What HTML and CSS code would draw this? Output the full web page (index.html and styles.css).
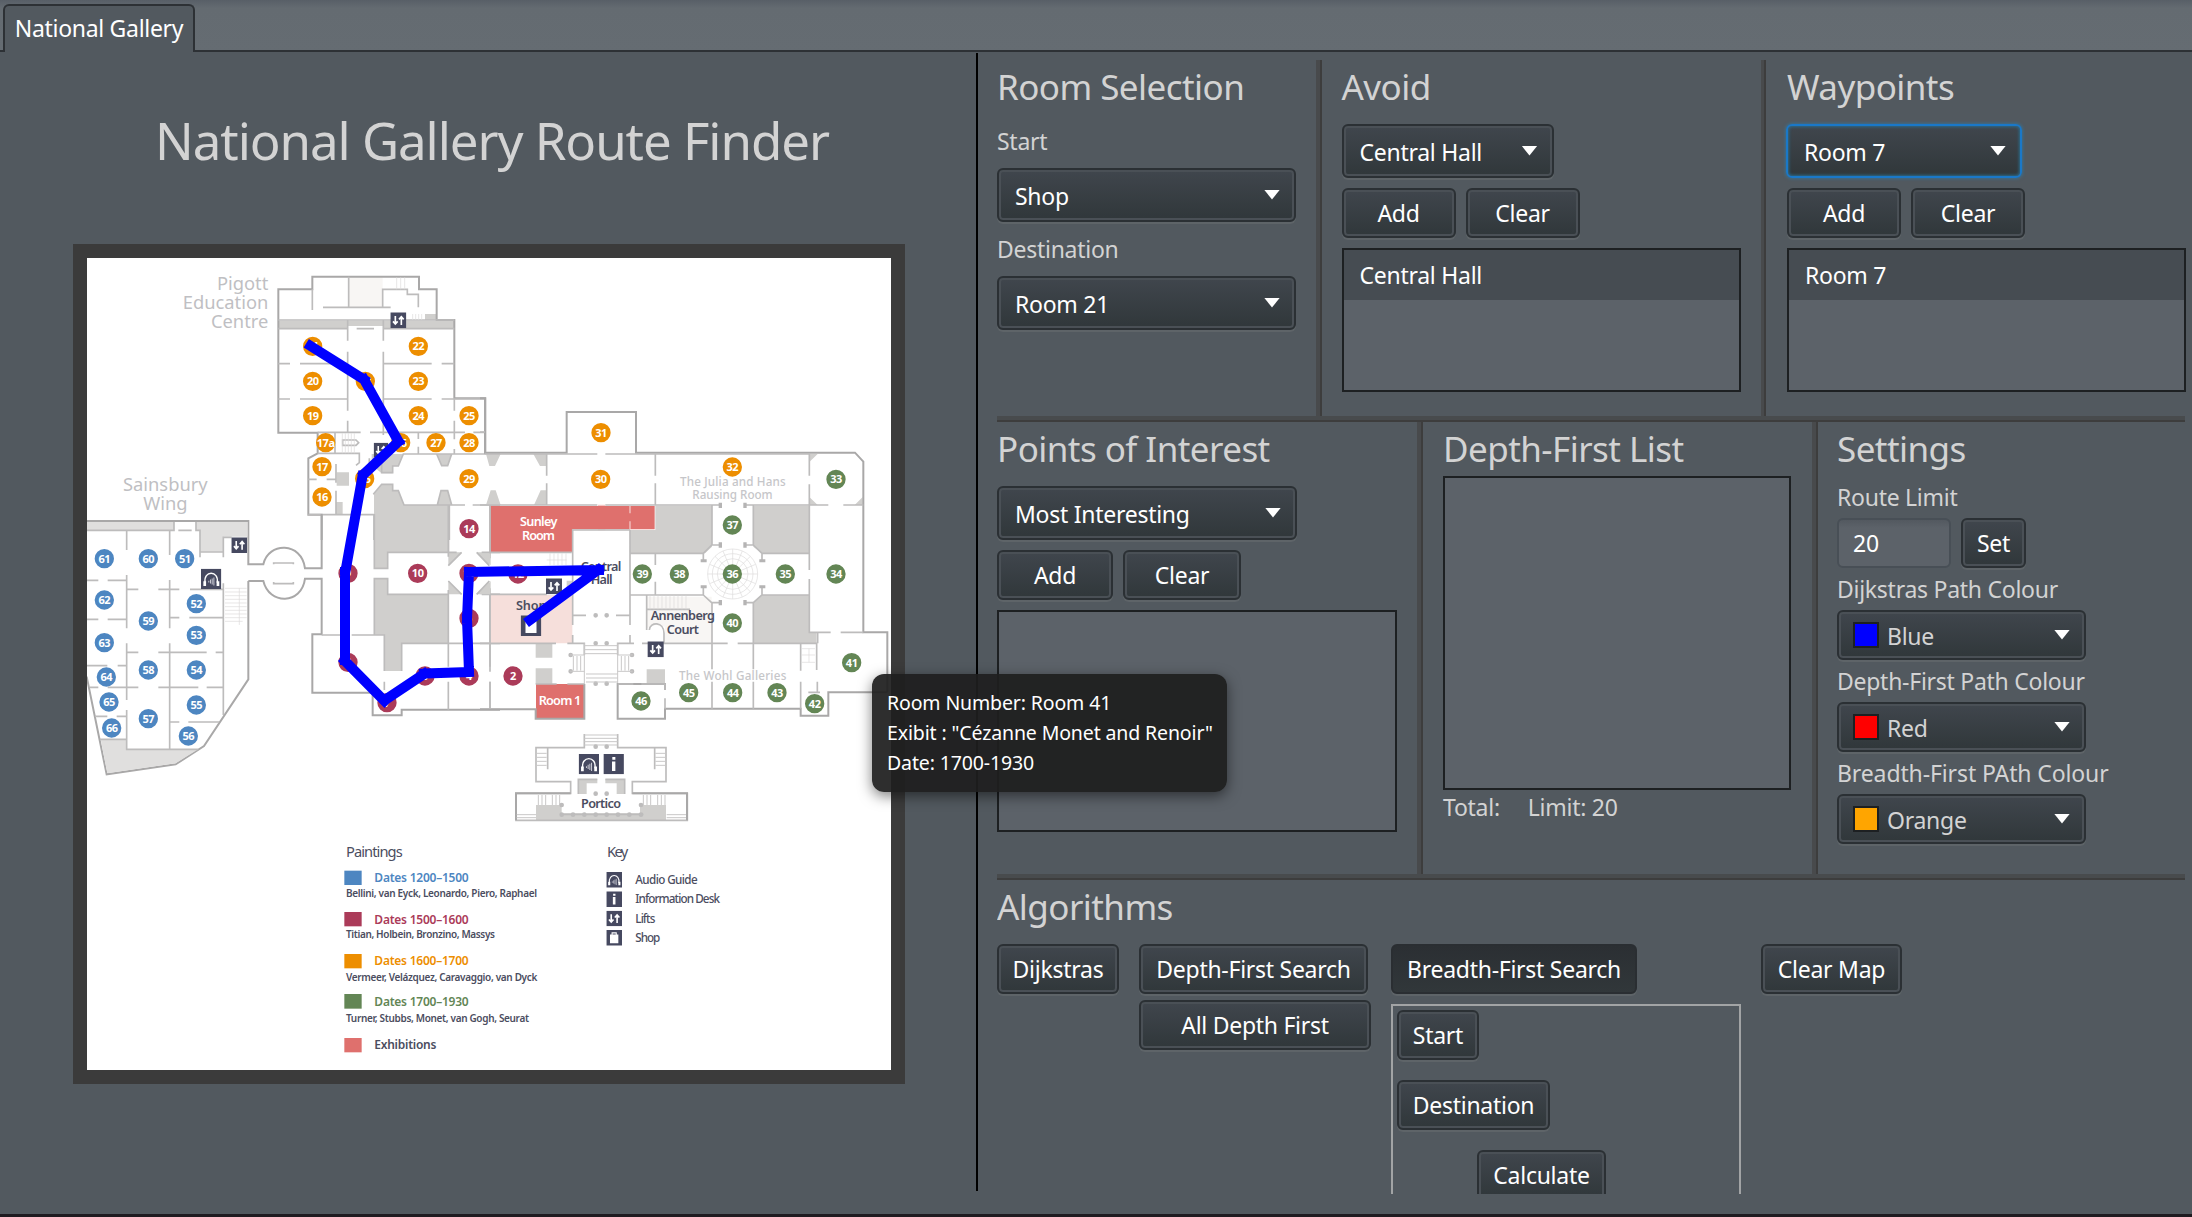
FILE: index.html
```html
<!DOCTYPE html>
<html lang="en">
<head>
<meta charset="utf-8">
<title>National Gallery</title>
<link rel="stylesheet" href="styles.css">
</head>
<body>
<div class="tabs"><div class="tab">National Gallery</div></div>
<main class="app">
  <section class="map-side">
    <h1>National Gallery Route Finder</h1>
    <div class="frame">
      <svg class="map" viewBox="0 0 804 812" width="804" height="812">
        <defs>
          <symbol id="lift" viewBox="0 0 48 48"><rect width="48" height="48" fill="#464960"/><path d="M15 11V34M8 27L15 35L22 27M33 38V14M26 21L33 13L40 21" fill="none" stroke="#fff" stroke-width="5"/></symbol>
          <symbol id="audio" viewBox="0 0 60 60"><rect width="60" height="60" fill="#464960"/><path d="M12 42C6 4 54 4 48 42" fill="none" stroke="#fff" stroke-width="4"/><path d="M7 37h8v14h-8zM46 37h8v14h-8z" fill="#fff"/><path d="M23 36v5M28 32v12M33 29v18M38 26v24" stroke="#c8c9d2" stroke-width="3"/></symbol>
          <symbol id="info" viewBox="0 0 60 60"><rect width="60" height="60" fill="#464960"/><path d="M26 9h9v8h-9zM25 22h10v28h-10z" fill="#fff"/></symbol>
          <symbol id="bag" viewBox="0 0 60 60"><rect width="60" height="60" fill="#464960"/><path d="M14 17h32v34h-32z" fill="#fff"/><path d="M22 20v-9h16v9" fill="none" stroke="#fff" stroke-width="4"/></symbol>
        </defs>

        <!-- central block, north-west -->
        <g transform="translate(-17 -18) scale(.33333)">
          <g class="block">
            <path d="M625 242H1153V266H940V258H833V266H625zM1065 222h33v18h-33zM800 697h37v40h-37zM798 786h20v38h-20z"/>
            <path d="M905 642H1000L985 678H968V700H935L905 675zM885 765H910L935 733H968V752H985L1002 795H1138V937H915V823H885z"/>
            <path d="M1100 642H1145L1133 678H1115zM1102 795L1113 752H1133L1145 795z"/>
          </g>
          <path d="M836 112H938V202H836z" fill="#f8f6f4"/>
          <path d="M857 765H912V823H857z" fill="#fff"/>
          <path class="wall" d="M625 240V148H727V110H1047V148H1100V240H1153V475H1246V640H1290M625 240V578H743V640L715 655V824H755V900"/>
          <path class="inner" d="M625 240H1153M625 266H833M940 266H1153M727 148V210M836 110V202M759 202H962M938 202V148H1012V163H1045V202M860 266H912M833 242V302M833 335V512M833 542V578M940 242V302M940 335V585M625 371H660M690 371H833M940 371H1085M1115 371H1153M625 477H660M690 477H833M940 477H1085M1115 477H1246M1153 475V512M1153 542V598M1153 627V640M743 577H872M900 577H1185M1210 577H1246M1045 577V597M1045 620V640M795 578V640M743 640H868V668L858 676M715 718H740M770 718H798V672M798 718V728M798 752V824M715 824H912M912 824V900M898 655V668H935V698H968V678H985L1000 642H1246M818 600H858L866 608L858 616H818zM910 763L935 733H968V752H985L1002 795H1185M1208 795H1290M1100 642L1115 677H1133L1145 642M1102 795L1113 752H1133L1145 795M1138 795V900"/>
          <path class="thin" d="M817 580V640M826 580V640M835 580V640M844 580V640M853 580V640M980 112V148M992 112V148M1004 112V148M1028 222V240M1037 222V240M1046 222V240M1055 222V240"/>
          <use href="#lift" x="961" y="217" width="48" height="48"/><use href="#lift" x="911" y="608" width="44" height="44"/>
        </g>

        <!-- central block, west -->
        <g transform="translate(-17 242) scale(.33333)">
          <g class="block">
            <path d="M915 42H1135V157H953V205H915zM915 235H953V283H1135V430H995V513H943V405H915z"/>
            <path d="M1135 157H1175L1135 197zM1220 157H1258V197zM1135 283V243L1175 283zM1258 283V243L1220 283z"/>
          </g>
          <path d="M1258 17H1290V157H1258z" fill="#df706d"/>
          <path class="wall" d="M755 42V205H705C695 125 595 125 580 193H535V63H45M535 243H580C597 315 695 315 705 236H755V403H727V578H908V646H995V629H1290M535 243V538L402 738L317 793L110 823L50 530"/>
          <path d="M50 66H312V90H50zM378 66H533V110H462V155H390V90H378zM92 718H170V748H385L317 790L112 820z" class="paleblock"/>
          <path class="inner" d="M50 91H312V66M325 91H365M378 66V91H390V172M390 156H460M460 172V112H485M170 91V150M170 225V385M299 91V165M299 240V385M50 241H85M113 241H170M170 268H205M265 268H328M360 268H460M50 358H85M113 358H170M299 353H328M358 353H460M460 250V645M50 497H112M143 497H170M170 430V600M170 630V748H385M170 457H205M265 457H410M437 457H460M299 430V748M170 562H205M265 562H385M410 562H460M60 562H85M113 562H170M75 649H112M140 649H170M90 718H170M299 666H328M355 666H447M755 405H815M845 405H943V513M913 42V205H953V157H1160M913 405V236H953V283H1135M1135 15V170M1135 270V500M1235 157H1290M1235 283H1290M1260 15V175M1260 265V500M995 513V430H1290M1135 545V629M1260 545V629M943 545V570M1135 197L1175 157M1258 197L1220 157M1135 243L1175 283M1258 243L1220 283"/>
          <path class="inner" d="M611 193V189H670V193M611 246V251H670V246"/>
          <path class="thin" d="M465 265H530M465 276H530M465 287H530M465 298H530M465 309H530M465 320H530M465 331H530M465 342H530M465 353H530M465 364H518M508 265V375"/>
          <use href="#lift" x="484" y="112" width="47" height="47"/><use href="#audio" x="393" y="206" width="61" height="61"/>
        </g>

        <!-- central block, east -->
        <g transform="translate(393 122) scale(.33333)">
          <path d="M500 650H695V788H555V740L528 735L500 745z" fill="#f8f6f4"/>
          <path d="M32 645H277V790H32z" fill="#f6dfdb"/>
          <path d="M32 378H524V448H277V516H32z" fill="#df706d"/>
          <path d="M450 378V400M450 424V448M354 376H376M354 449H376" stroke="#f3c5c3" stroke-width="4"/>
          <g class="block">
            <path d="M18 222H62L45 258H28zM160 222H200V258H180zM18 375L32 331H47L62 375zM162 375L182 331H200V375z"/>
            <path d="M450 450H526V377H696V500L675 520H450zM820 377H988V519H845L820 500zM845 645H988V757H1010V790H820V668z"/>
            <path d="M988 222H1013L988 246zM988 375V351L1013 375zM1148 375H1124L1148 351zM0 520H32V556zM0 643H32V603zM260 602h17v43h-17z"/>
            <path d="M167 790h50v43h-50zM167 865h50v47h-50zM500 868h55v44h-55z"/>
          </g>
          <path class="wall" d="M0 55H15V218H260V96H468V218H1125L1150 245V757H1222V937"/>
          <path class="inner" d="M15 222H352M376 222H988V287M0 156H15M200 222V287M200 310V375M526 222V287M526 310V375M450 450H278V735M526 520V555M526 605V645M988 313V570M988 597V757H1052M1082 757H1150M0 375H352M376 375H720M796 375H1045M1090 375H1150M696 375V495M820 375V495M30 378V517H275M450 450V735M450 765V790M450 520H670V543M450 645H670V620M846 543V520H988M846 620V645H988M278 765V790M30 645V875M30 643H200M228 790H0M262 790H313V825M413 825V790H462M486 790H743M773 790H1010V870M278 706H318M408 706H448M500 645V750M500 688H630M696 668V868M820 668V868M962 790V872M1013 757V790M820 495L846 520M796 495H820M720 495H695L670 520M670 645L695 668H720M796 668H820L846 645M508 750C510 724 552 724 552 760V790"/>
          <path d="M716 368h10v16h-10zM790 368h10v16h-10zM716 487h10v16h-10zM790 487h10v16h-10zM716 660h10v16h-10zM790 660h10v16h-10zM662 538h18v9h-18zM838 538h18v9h-18zM662 616h18v9h-18zM838 616h18v9h-18z" fill="#b5b4b4"/>
          <g class="thin"><circle cx="758" cy="582" r="75"/><circle cx="758" cy="582" r="61"/><circle cx="758" cy="582" r="46"/><path d="M683 582H833M758 507V657M705 529L811 635M811 529L705 635M689 553L827 611M827 553L689 611M729 513L787 651M787 513L729 651"/>
            <path d="M510 647V688M522 647V688M534 647V688M546 647V688M558 647V688M570 647V688M582 647V688M594 647V688M606 647V688M618 647V688M210 520V555M222 520V555M234 520V555M246 520V555M258 520V555M200 540H260M965 806H1005M965 825H1005M965 847H1005M987 806V847"/></g>
          <path class="dots" d="M347 706h0M380 706h0M347 790h0M380 790h0M272 825h0M456 825h0M272 874h0M456 874h0M347 911h0M380 911h0"/>
          <path class="stairs" d="M313 797H413M313 809H413M313 821H413M318 882H413M318 894H413M318 906H413M280 828V872M291 828V872M302 828V872M313 790V912M413 790V912M424 828V872M435 828V872M446 828V872M270 825H313M413 825H458M270 874H313M413 874H458"/>
          <use href="#lift" x="198" y="595" width="48" height="48"/><use href="#lift" x="501" y="784" width="52" height="48"/><use href="#bag" x="122" y="706" width="62" height="62"/>
        </g>

        <!-- south front and portico -->
        <g transform="translate(393 382) scale(.33333)">
          <path d="M168 132H312V236H168z" fill="#df706d"/>
          <path class="block" d="M295 418H352V430H320V462H295zM376 418H434V462H410V430H376zM168 495H245V520H480V495H558V540H168z"/>
          <path class="wall" d="M0 208H167V236H313V132M555 150V132H413V236H555V206H962V227H1045V157H1222"/>
          <path class="inner" d="M30 125V206M167 132H230M262 132H313M413 132H460M484 132H555V150M555 175V206M696 125V206M820 125V206M962 125V206M1012 125V157M985 157H1020M313 282V323H168V425H272V460H108V541H622V460H457V425H558V323H413V282M203 325V388M524 325V388M352 418H295V462M376 418H434V462M240 523H490"/>
          <path class="wall" d="M272 460H108V541M457 460H621V541"/>
          <path class="stairs" d="M313 285H413M313 295H413M313 305H413M313 315H413M170 340H200M170 352H200M170 364H200M170 376H200M526 340H556M526 352H556M526 364H556M526 376H556M175 465V495M186 465V495M197 465V495M217 465V495M228 465V495M239 465V495M490 465V495M501 465V495M512 465V495M533 465V495M544 465V495M555 465V495M110 524H168M110 533H168M560 524H618M560 533H618"/>
          <path class="dots" d="M347 320h0M380 320h0M347 461h0M380 461h0M245 495h0M483 495h0M245 524h0M279 524h0M313 524h0M347 524h0M380 524h0M414 524h0M448 524h0M483 524h0"/>
          <use href="#audio" x="296" y="342" width="61" height="61"/><use href="#info" x="370" y="342" width="62" height="61"/>
        </g>

        <!-- room markers -->
        <g transform="translate(-17 -18) scale(.33333)">
          <path class="pin orange" d="M728 319h0M1045 319h0M728 424h0M886 424h0M1045 424h0M728 527h0M1045 527h0M1197 527h0M767 608h0M992 608h0M1098 608h0M1197 608h0M756 680h0M1197 716h0M884 716h0M756 771h0"/>
          <path class="pin crimson" d="M1197 866h0"/>
          <text class="num"><tspan x="728" y="331">21</tspan><tspan x="1045" y="331">22</tspan><tspan x="728" y="436">20</tspan><tspan x="886" y="436">18</tspan><tspan x="1045" y="436">23</tspan><tspan x="728" y="539">19</tspan><tspan x="1045" y="539">24</tspan><tspan x="1197" y="539">25</tspan><tspan x="767" y="620">17a</tspan><tspan x="992" y="620">26</tspan><tspan x="1098" y="620">27</tspan><tspan x="1197" y="620">28</tspan><tspan x="756" y="692">17</tspan><tspan x="1197" y="728">29</tspan><tspan x="884" y="728">15</tspan><tspan x="756" y="783">16</tspan><tspan x="1197" y="878">14</tspan></text>
          <text class="area" text-anchor="end"><tspan x="595" y="150">Pigott</tspan><tspan x="595" y="207">Education</tspan><tspan x="595" y="263">Centre</tspan></text>
          <text class="area" text-anchor="middle"><tspan x="286" y="753">Sainsbury</tspan><tspan x="286" y="809">Wing</tspan></text>
        </g>
        <g transform="translate(-17 242) scale(.33333)">
          <path class="pin blue" d="M103 176h0M235 176h0M344 176h0M103 300h0M379 311h0M235 363h0M379 406h0M103 428h0M235 510h0M379 510h0M109 531h0M117 606h0M379 615h0M235 656h0M125 684h0M355 708h0"/>
          <path class="pin crimson" d="M834 220h0M1043 220h0M1197 220h0M1197 355h0M834 487h0M951 608h0M1065 528h0M1197 528h0"/>
          <text class="num"><tspan x="103" y="188">61</tspan><tspan x="235" y="188">60</tspan><tspan x="344" y="188">51</tspan><tspan x="103" y="312">62</tspan><tspan x="379" y="323">52</tspan><tspan x="235" y="375">59</tspan><tspan x="379" y="418">53</tspan><tspan x="103" y="440">63</tspan><tspan x="235" y="522">58</tspan><tspan x="379" y="522">54</tspan><tspan x="109" y="543">64</tspan><tspan x="117" y="618">65</tspan><tspan x="379" y="627">55</tspan><tspan x="235" y="668">57</tspan><tspan x="125" y="696">66</tspan><tspan x="355" y="720">56</tspan><tspan x="834" y="232">9</tspan><tspan x="1043" y="232">10</tspan><tspan x="1197" y="232">11</tspan><tspan x="1197" y="367">3</tspan><tspan x="834" y="499">8</tspan><tspan x="951" y="620">7</tspan><tspan x="1065" y="540">5</tspan><tspan x="1197" y="540">4</tspan></text>
        </g>
        <g transform="translate(393 122) scale(.33333)">
          <path class="pin orange" d="M363 158h0M362 298h0M757 261h0"/>
          <path class="pin green" d="M1068 298h0M757 435h0M487 582h0M598 582h0M757 582h0M916 582h0M1068 582h0M757 729h0M1115 848h0M483 963h0M626 938h0M758 938h0M891 938h0M1004 971h0"/>
          <path class="pin crimson" d="M114 582h0M99 888h0"/>
          <text class="num"><tspan x="363" y="170">31</tspan><tspan x="362" y="310">30</tspan><tspan x="757" y="273">32</tspan><tspan x="1068" y="310">33</tspan><tspan x="757" y="447">37</tspan><tspan x="487" y="594">39</tspan><tspan x="598" y="594">38</tspan><tspan x="757" y="594">36</tspan><tspan x="916" y="594">35</tspan><tspan x="1068" y="594">34</tspan><tspan x="757" y="741">40</tspan><tspan x="1115" y="860">41</tspan><tspan x="483" y="975">46</tspan><tspan x="626" y="950">45</tspan><tspan x="758" y="950">44</tspan><tspan x="891" y="950">43</tspan><tspan x="1004" y="983">42</tspan><tspan x="114" y="594">12</tspan><tspan x="99" y="900">2</tspan></text>
          <g class="gallery"><text x="600" y="319" textLength="317">The Julia and Hans</text><text x="637" y="357" textLength="241">Rausing Room</text><text x="597" y="899" textLength="322">The Wohl Galleries</text></g>
          <g class="place white"><text x="120" y="438" textLength="112">Sunley</text><text x="126" y="479" textLength="99">Room</text><text x="176" y="974" textLength="128">Room 1</text></g>
          <g class="place"><text x="302" y="572" textLength="122">Central</text><text x="332" y="612" textLength="66">Hall</text><text x="108" y="691" textLength="91">Shop</text><text x="512" y="721" textLength="193">Annenberg</text><text x="560" y="761" textLength="97">Court</text><text x="303" y="1283" textLength="120">Portico</text></g>
        </g>

        <!-- legend -->
        <g class="legend" transform="translate(233 562) scale(.33333)">
          <text class="title" x="78" y="111" textLength="170">Paintings</text><text class="title" x="861" y="111" textLength="64">Key</text>
          <path d="M73 152h52v43h-52z" fill="#4d86c1"/><path d="M73 276h52v43h-52z" fill="#ab3b59"/><path d="M73 402h52v43h-52z" fill="#ed8e00"/><path d="M73 522h52v44h-52z" fill="#638655"/><path d="M73 654h52v43h-52z" fill="#df706d"/>
          <g class="dates"><text class="d-blue" x="163" y="185" textLength="283">Dates 1200–1500</text><text class="d-crimson" x="163" y="312" textLength="283">Dates 1500–1600</text><text class="d-orange" x="163" y="435" textLength="283">Dates 1600–1700</text><text class="d-green" x="163" y="559" textLength="283">Dates 1700–1930</text><text x="163" y="686" textLength="186">Exhibitions</text></g>
          <g class="names"><text x="78" y="230" textLength="573">Bellini, van Eyck, Leonardo, Piero, Raphael</text><text x="78" y="354" textLength="447">Titian, Holbein, Bronzino, Massys</text><text x="78" y="482" textLength="574">Vermeer, Velázquez, Caravaggio, van Dyck</text><text x="78" y="605" textLength="549">Turner, Stubbs, Monet, van Gogh, Seurat</text></g>
          <g class="keys"><text x="946" y="192" textLength="187">Audio Guide</text><text x="946" y="250" textLength="254">Information Desk</text><text x="946" y="308" textLength="60">Lifts</text><text x="946" y="366" textLength="75">Shop</text></g>
          <use href="#audio" x="859" y="156" width="47" height="47"/><use href="#info" x="859" y="214" width="47" height="47"/><use href="#lift" x="859" y="272" width="47" height="47"/><use href="#bag" x="859" y="330" width="47" height="47"/>
        </g>

        <path class="route" d="M223.500 88L277 121.500M277 121.500L311.500 183.500M311.500 183.500L277 216M275.500 218L258.500 313M258 314V402M258 403L297.500 443M298 442L337 416M337 415.500L382 414M382 414L380 361M380 361L382 314M382 314L512 312M511 312L443 362"/>
      </svg>
    </div>
  </section>

  <section class="controls">
    <div class="row top">
      <div class="panel rooms">
        <h2>Room Selection</h2>
        <label>Start</label>
        <div class="combo"><span>Shop</span><i></i></div>
        <label>Destination</label>
        <div class="combo"><span>Room 21</span><i></i></div>
      </div>
      <div class="vsep"></div>
      <div class="panel avoid">
        <h2>Avoid</h2>
        <div class="combo"><span>Central Hall</span><i></i></div>
        <div class="pair"><button>Add</button><button>Clear</button></div>
        <div class="list"><div class="item">Central Hall</div></div>
      </div>
      <div class="vsep"></div>
      <div class="panel waypoints">
        <h2>Waypoints</h2>
        <div class="combo focused"><span>Room 7</span><i></i></div>
        <div class="pair"><button>Add</button><button>Clear</button></div>
        <div class="list"><div class="item">Room 7</div></div>
      </div>
    </div>
    <div class="hsep"></div>
    <div class="row middle">
      <div class="panel points">
        <h2>Points of Interest</h2>
        <div class="combo"><span>Most Interesting</span><i></i></div>
        <div class="pair"><button>Add</button><button class="wide">Clear</button></div>
        <div class="list"></div>
      </div>
      <div class="vsep"></div>
      <div class="panel depth">
        <h2>Depth-First List</h2>
        <div class="list"></div>
        <div class="totals"><span>Total:</span><span>Limit: 20</span></div>
      </div>
      <div class="vsep"></div>
      <div class="panel settings">
        <h2>Settings</h2>
        <label>Route Limit</label>
        <div class="pair"><div class="field">20</div><button>Set</button></div>
        <label>Dijkstras Path Colour</label>
        <div class="combo"><b class="swatch s-blue"></b><span>Blue</span><i></i></div>
        <label>Depth-First Path Colour</label>
        <div class="combo"><b class="swatch s-red"></b><span>Red</span><i></i></div>
        <label class="loose">Breadth-First PAth Colour</label>
        <div class="combo"><b class="swatch s-orange"></b><span>Orange</span><i></i></div>
      </div>
    </div>
    <div class="hsep"></div>
    <div class="algorithms">
      <h2>Algorithms</h2>
      <div class="algos">
        <button class="dijkstra">Dijkstras</button>
        <div class="dfs"><button class="search">Depth-First Search</button><button class="all">All Depth First</button></div>
        <div class="bfs">
          <button class="pressed">Breadth-First Search</button>
          <div class="box"><button class="b-start">Start</button><button class="b-dest">Destination</button><button class="b-calc">Calculate</button></div>
        </div>
        <button class="clear-map">Clear Map</button>
      </div>
    </div>
  </section>
</main>
<div class="tooltip">Room Number: Room 41<br><span>Exibit : "Cézanne Monet and Renoir"</span><br>Date: 1700-1930</div>
</body>
</html>
```
FILE: styles.css
```css
* { box-sizing: border-box; }
body { margin: 0; width: 2192px; height: 1217px; overflow: hidden; display: flex; flex-direction: column; background: #52595f; border-bottom: 3px solid #1f1b20; color: #d3d3d3; font: 23px/32px "Noto Sans", "Open Sans", sans-serif; letter-spacing: -.27px; }
h1, h2 { margin: 0; font-weight: 400; }
.tabs { height: 52px; flex: none; padding: 4px 0 0 3px; background: linear-gradient(#585f67, #646b71 8px, #656c72); box-shadow: inset 0 -2px #2d3135; }
.tab { width: 192px; height: 48px; border: 2px solid #2d3135; border-bottom: 0; border-radius: 6px 6px 0 0; background: #52595f; color: #fff; text-align: center; line-height: 45px; letter-spacing: -.3px; white-space: nowrap; }
.app { display: flex; flex: 1; min-height: 0; }
.map-side { width: 978px; height: 1138px; margin-top: 1px; border-right: 2px solid #000; padding-left: 73px; }
h1 { width: 838px; padding: 52px 0 0; height: 191px; font-size: 51px; line-height: 70px; letter-spacing: -1.05px; text-align: center; white-space: nowrap; }
.frame { width: 832px; height: 840px; padding: 14px; background: #3b3b3b; }
.map { display: block; background: #fff; }

.controls { width: 1189px; margin: 8px 0 0 19px; display: flex; flex-direction: column; }
.row { display: flex; }
.top { height: 356px; }
.middle { height: 452px; }
.vsep { width: 6px; background: #484a4c; border-right: 2px solid #3d3d3d; }
.hsep { height: 6px; width: 1188px; background: linear-gradient(#484b4d 4px, #3d3d3d 4px); flex: none; }
.panel { display: flex; flex-direction: column; align-items: flex-start; padding-top: 2px; flex: none; }
h2 { font-size: 35px; line-height: 48px; padding-top: 1px; height: 48px; letter-spacing: -.55px; white-space: nowrap; }
label { white-space: nowrap; }
.loose { letter-spacing: -.12px; }
.rooms { width: 319px; gap: 11px; }
.rooms h2 { margin-bottom: 4px; }
.rooms .combo { width: 299px; }
.avoid, .waypoints, .points { gap: 10px; }
.avoid h2, .waypoints h2, .points h2 { margin-bottom: 4px; }
.avoid { width: 439px; padding-left: 20px; }
.avoid .combo { width: 212px; }
.avoid .list { width: 399px; height: 144px; }
.waypoints { padding-left: 20px; }
.waypoints > * { margin-left: 1px; }
.waypoints .combo { width: 236px; }
.waypoints .list { width: 399px; height: 144px; }
.points { width: 420px; }
.points .combo { width: 300px; }
.points button { width: 116px; }
.points .wide { width: 118px; }
.points .list { width: 400px; height: 222px; }
.depth { width: 389px; padding-left: 20px; }
.depth .list { width: 348px; height: 314px; margin: 4px 0 1px; }
.totals { display: flex; gap: 28px; }
.settings { padding-left: 19px; gap: 5px; }
.settings h2 { margin-bottom: 4px; }
.settings .combo { width: 249px; height: 50px; padding-left: 12px; color: #d3d3d3; }
.settings button { width: 65px; }
.pair { display: flex; gap: 10px; }

button, .combo { appearance: none; height: 50px; margin: 0; border: 2px solid #2b3034; border-radius: 6px; background: linear-gradient(#40464d, #30373a) padding-box; box-shadow: inset 0 0 0 2px #4a5056, 0 2px 0 #5e6468; color: #fff; font: inherit; letter-spacing: inherit; white-space: nowrap; }
button { width: 114px; padding: 0; flex: none; }
.combo { height: 54px; display: flex; align-items: center; padding: 0 14px 0 16px; }
.combo span { padding-top: 1px; }
.combo i { margin-left: auto; margin-top: -1px; width: 16px; height: 10px; background: #fff; clip-path: polygon(0 0, 100% 0, 50% 100%); }
.combo.focused { border-color: #1a78c8; box-shadow: inset 0 0 3px 1px #2c6c8c, 0 0 3px 1px #3a6f8e; }
.swatch { width: 26px; height: 26px; margin: 0 8px 0 2px; border: 2px solid #1d2022; }
.s-blue { background: #00f; }
.s-red { background: #f00; }
.s-orange { background: #ffa500; }
.list { border: 2px solid #1d2022; background: #5c6269; flex: none; }
.item { height: 50px; padding-left: 16px; line-height: 51px; color: #fff; background: #464c52; }
.field { width: 114px; height: 50px; padding-left: 14px; border: 2px solid #484f56; border-radius: 6px; background: linear-gradient(#535960, #5c6269 8px); color: #fff; line-height: 47px; }

.algorithms { padding-top: 2px; height: 314px; overflow: hidden; }
.algos { display: flex; align-items: flex-start; margin-top: 14px; }
.dijkstra { width: 122px; margin-right: 20px; }
.dfs { display: flex; flex-direction: column; gap: 6px; width: 252px; }
.search { width: 229px; }
.all { width: 232px; }
.bfs { display: flex; flex-direction: column; gap: 10px; width: 370px; }
.pressed { width: 246px; background: linear-gradient(#2b2f33, #31373a); border-color: #2a2e32; box-shadow: 0 2px 0 #5e6468; }
.box { width: 350px; height: 230px; border: 2px solid #a2a4a5; padding: 4px; display: flex; flex-direction: column; gap: 20px; }
.b-start { width: 82px; }
.b-dest { width: 153px; }
.b-calc { width: 129px; margin-left: 80px; }
.clear-map { width: 141px; }

.tooltip { position: absolute; left: 872px; top: 674px; width: 355px; height: 118px; padding: 14px 0 0 15px; border-radius: 12px; background: rgba(30, 30, 30, .93); box-shadow: 0 4px 14px rgba(0, 0, 0, .5); color: #fff; font-size: 19.5px; line-height: 30px; letter-spacing: -.13px; white-space: nowrap; }

.wall { fill: none; stroke: #a9a8a8; stroke-width: 6; }
.inner { fill: none; stroke: #bdbcbc; stroke-width: 5; }
.thin { fill: none; stroke: #dcdbdb; stroke-width: 2; }
.stairs { fill: none; stroke: #c9c8c8; stroke-width: 3; }
.block { fill: #d0cfcd; }
.paleblock { fill: #e0dfde; }
.dots { stroke: #bdbcbc; stroke-width: 14; stroke-linecap: round; }
.pin { stroke-width: 58; stroke-linecap: round; }
.orange { stroke: #ed8e00; }
.crimson { stroke: #ab3b59; }
.green { stroke: #638655; }
.blue { stroke: #4d86c1; }
.map text { font-family: "Noto Sans", sans-serif; letter-spacing: 0; fill: #4b4d60; }
.map .num { font-size: 33px; font-weight: 700; fill: #fff; text-anchor: middle; letter-spacing: -1.5px; }
.map .area { font-size: 55px; fill: #bfbfc3; }
.map .gallery text { font-size: 35px; font-weight: 500; fill: #c6c6c9; }
.map .place text { font-size: 38px; font-weight: 600; }
.map .white text { fill: #fff; }
.map .legend .title { font-size: 44px; }
.map .dates text { font-size: 36px; font-weight: 600; }
.map .dates .d-blue { fill: #4d86c1; }
.map .dates .d-crimson { fill: #ab3b59; }
.map .dates .d-orange { fill: #ed8e00; }
.map .dates .d-green { fill: #638655; }
.map .names text { font-size: 30px; font-weight: 600; }
.map .keys text { font-size: 35px; font-weight: 500; }
.route { fill: none; stroke: #00f; stroke-width: 10; stroke-linecap: square; }
```
